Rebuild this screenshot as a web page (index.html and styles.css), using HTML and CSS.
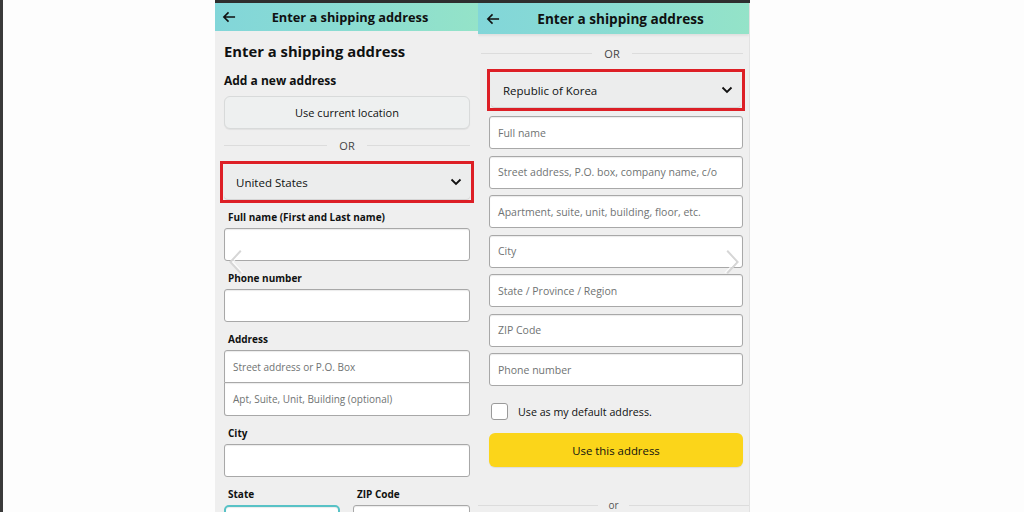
FILE: index.html
```html
<!DOCTYPE html>
<html>
<head>
<meta charset="utf-8">
<link rel="stylesheet" href="styles.css">
</head>
<body>
<div class="edge"></div>
<div class="stage">
  <div class="screens">
    <div class="panel left">
      <div class="appbar">
        <svg class="back" viewBox="0 0 15 12"><path d="M14 6 H2 M7 1 L2 6 L7 11" fill="none" stroke="#111" stroke-width="1.7"/></svg>
        <span class="apptitle">Enter a shipping address</span>
      </div>
      <div class="content">
        <h1 class="h1">Enter a shipping address</h1>
        <h2 class="h2">Add a new address</h2>
        <div class="btn-loc">Use current location</div>
        <div class="divider"><span>OR</span></div>
        <div class="redbox">
          <div class="select"><span>United States</span><svg class="chev" viewBox="0 0 12 8"><path d="M1.5 1.5 L6 6 L10.5 1.5" fill="none" stroke="#111" stroke-width="1.8"/></svg></div>
        </div>
        <div class="label">Full name (First and Last name)</div>
        <div class="input"></div>
        <div class="label">Phone number</div>
        <div class="input"></div>
        <div class="label">Address</div>
        <div class="group">
          <div class="input ph">Street address or P.O. Box</div>
          <div class="input ph">Apt, Suite, Unit, Building (optional)</div>
        </div>
        <div class="label">City</div>
        <div class="input"></div>
        <div class="pair">
          <div class="col"><div class="label">State</div><div class="input focus"></div></div>
          <div class="col"><div class="label">ZIP Code</div><div class="input"></div></div>
        </div>
      </div>
    </div>
    <div class="panel right">
      <div class="appbar">
        <svg class="back" viewBox="0 0 15 12"><path d="M14 6 H2 M7 1 L2 6 L7 11" fill="none" stroke="#111" stroke-width="1.7"/></svg>
        <span class="apptitle">Enter a shipping address</span>
      </div>
      <div class="content">
        <div class="divider top"><span>OR</span></div>
        <div class="redbox">
          <div class="select"><span>Republic of Korea</span><svg class="chev" viewBox="0 0 12 8"><path d="M1.5 1.5 L6 6 L10.5 1.5" fill="none" stroke="#111" stroke-width="1.8"/></svg></div>
        </div>
        <div class="stack">
          <div class="input ph">Full name</div>
          <div class="input ph">Street address, P.O. box, company name, c/o</div>
          <div class="input ph">Apartment, suite, unit, building, floor, etc.</div>
          <div class="input ph">City</div>
          <div class="input ph">State / Province / Region</div>
          <div class="input ph">ZIP Code</div>
          <div class="input ph">Phone number</div>
        </div>
        <label class="check"><span class="box"></span><span>Use as my default address.</span></label>
        <div class="btn-yellow">Use this address</div>
        <div class="divider small"><span>or</span></div>
      </div>
    </div>
    <svg class="nav prev" viewBox="0 0 20 32"><path d="M16 2 L3 16 L16 30" fill="none" stroke="#d6d6d6" stroke-width="2.5"/><path d="M19 2 L6 16 L19 30" fill="none" stroke="#ffffff" stroke-width="1.5" opacity="0.8"/></svg>
    <svg class="nav next" viewBox="0 0 20 32"><path d="M4 2 L17 16 L4 30" fill="none" stroke="#d6d6d6" stroke-width="2.5"/><path d="M1 2 L14 16 L1 30" fill="none" stroke="#ffffff" stroke-width="1.5" opacity="0.8"/></svg>
  </div>
</div>
</body>
</html>
```

FILE: styles.css
```css
* { box-sizing: border-box; }
html, body { margin: 0; padding: 0; }
body {
  width: 1024px;
  height: 512px;
  overflow: hidden;
  background: #fdfdfd;
  display: flex;
  font-family: "Open Sans", "Noto Sans", sans-serif;
  color: #0f1111;
}
.edge { width: 3px; background: #3a3a3a; flex: none; }
.stage { flex: 1; padding-left: 212px; }
.screens {
  position: relative;
  width: 535px;
  height: 512px;
  border-top: 3px solid #2e2e2e;
  display: flex;
}
.panel {
  background: #efefef;
  overflow: hidden;
  height: 509px;
}
.panel.left { width: 263px; }
.panel.right { width: 272px; border-right: 1px solid #e2e2e2; }
.appbar {
  display: flex;
  align-items: center;
  background: linear-gradient(90deg, #82d6d9 0%, #8adcd2 50%, #94e3c8 100%);
  font-weight: 700;
}
.left .appbar { height: 28px; padding-left: 7px; }
.right .appbar { height: 31px; padding-left: 8px; box-shadow: 0 2px 2px rgba(0,0,0,0.06); }
.back { width: 14px; height: 12px; flex: none; margin-right: 6px; }
.apptitle { flex: 1; text-align: center; font-size: 12.8px; padding-right: 20px; }
.right .apptitle { font-size: 13.6px; padding-right: 14px; }
.content { padding: 0 8px 0 9px; }
.right .content { padding: 0 6px 0 11px; }
.h1 { font-size: 14.8px; margin: 8px 0 0; font-weight: 700; line-height: 24px; }
.h2 { font-size: 12px; margin: 9px 0 0; font-weight: 700; line-height: 18px; }
.btn-loc {
  margin-top: 6px;
  height: 33px;
  border: 1px solid #d8dada;
  border-radius: 6px;
  background: #eef0f0;
  display: flex; align-items: center; justify-content: center;
  font-size: 11px;
  box-shadow: 0 1px 1px rgba(0,0,0,0.06);
}
.divider {
  display: flex; align-items: center;
  font-size: 11px; color: #444;
  margin-top: 6px;
  height: 20px;
}
.divider::before, .divider::after {
  content: ""; flex: 1; height: 1px; background: #dcdcdc;
}
.divider span { padding: 0 12px; }
.divider.top { margin-top: 9px; margin-left: -8px; margin-right: 0; }
.redbox {
  margin: 6px -4px 0;
  border: 3px solid #dd1f26;
  padding: 1px;
}
.right .redbox { margin: 6px -2px 0 -2px; }
.select {
  height: 34px;
  background: #eceded;
  border-radius: 4px;
  display: flex; align-items: center; justify-content: space-between;
  padding: 0 8px 0 12px;
  font-size: 11.5px;
  box-shadow: 0 1px 1px rgba(0,0,0,0.12);
}
.chev { width: 12px; height: 8px; }
.label { font-size: 10px; font-weight: 700; margin: 7px 0 0 4px; line-height: 14px; }
.input {
  margin-top: 4px;
  height: 33px;
  background: #fff;
  border: 1px solid #a8a8a8;
  border-radius: 3px;
  box-shadow: 0 1px 1px rgba(0,0,0,0.08) inset;
  display: flex; align-items: center;
  padding-left: 8px;
  font-size: 10px;
  color: #6f7373;
}
.right .input { font-size: 10.5px; }
.input + .label, .group + .label { margin-top: 10px; }
.group .input { margin-top: 0; border-radius: 0; }
.group .input:first-child { border-radius: 3px 3px 0 0; margin-top: 4px; }
.group .input:last-child { border-radius: 0 0 3px 3px; border-top: none; height: 33px; }
.pair { display: flex; gap: 13px; margin-top: 0; }
.pair .col { flex: none; }
.pair .col:first-child { width: 116px; }
.pair .col:last-child { width: 117px; }
.pair .label { margin-top: 10px; }
.input.focus { border: 2px solid #58c2c6; border-radius: 5px; }
.stack { display: flex; flex-direction: column; gap: 6.5px; margin-top: 5px; }
.stack .input { margin-top: 0; height: 33px; }
.check {
  display: flex; align-items: center; gap: 10px;
  margin: 17px 0 0 2px;
  font-size: 10.7px;
  color: #0f1111;
}
.box {
  width: 17px; height: 17px;
  background: #fff;
  border: 1px solid #9a9a9a;
  border-radius: 3px;
}
.btn-yellow {
  margin-top: 13px;
  height: 34px;
  background: #fbd51a;
  border-radius: 6px;
  display: flex; align-items: center; justify-content: center;
  font-size: 11.4px;
  color: #0f1111;
  box-shadow: 0 1px 1px rgba(0,0,0,0.08);
}
.divider.small { margin: 28px -6px 0 -11px; font-size: 10px; color: #555; }
.divider.small span { padding: 0 10px; }
.nav { position: absolute; width: 16px; height: 26px; }
.nav.prev { left: 13px; top: 246px; }
.nav.next { left: 509px; top: 246px; }
```
